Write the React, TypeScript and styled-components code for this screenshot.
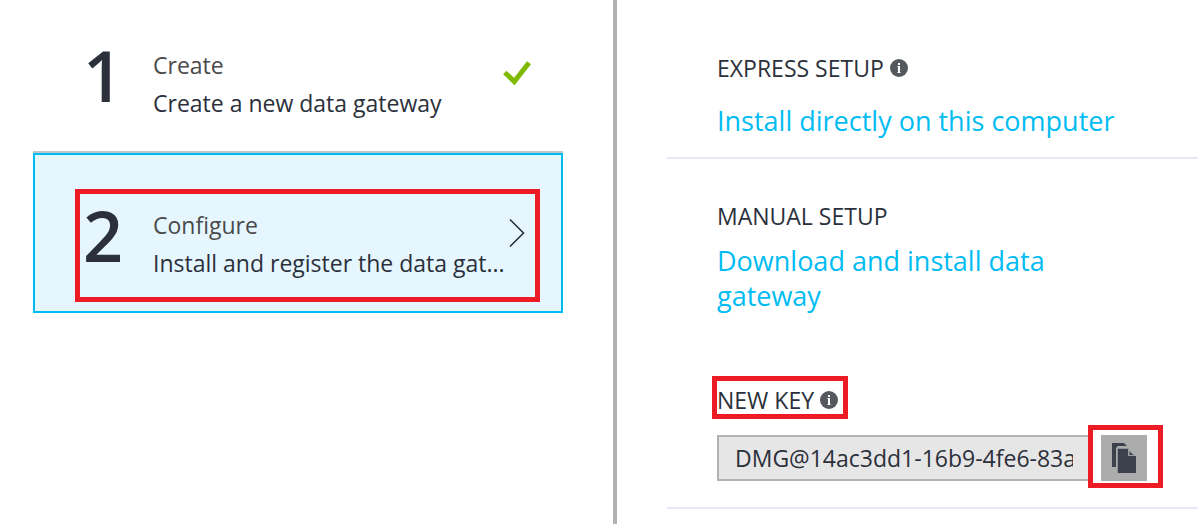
import React from "react";
import styled, { createGlobalStyle, css } from "styled-components";

const GlobalStyle = createGlobalStyle`
  *, *::before, *::after { box-sizing: border-box; }
  body {
    margin: 0;
    background: #fff;
    color: #2b303b;
    font-family: "Open Sans", "Noto Sans", sans-serif;
  }
`;

const Page = styled.main`
  display: grid;
  grid-template-columns: minmax(0, 617fr) minmax(0, 581fr);
  min-height: 100vh;
`;

const StepsPane = styled.section`
  padding: 0 50px 0 33px;
  border-right: 4px solid #b2b2b2;
`;

const SetupPane = styled.section`
  padding-left: 50px;
`;

const StepList = styled.ol`
  list-style: none;
  margin: 0;
  padding: 0;
`;

const Step = styled.li`
  position: relative;
`;

const StepButton = styled.button<{ $active?: boolean }>`
  display: flex;
  align-items: flex-start;
  width: 100%;
  margin: 0;
  border: 0;
  padding: 46px 32px 31px 50px;
  background: transparent;
  box-shadow: inset 0 -2px #c5c5c5;
  color: inherit;
  font: inherit;
  text-align: left;
  cursor: pointer;
  ${(p) =>
    p.$active &&
    css`
      padding-top: 53px;
      background: #e5f6fe;
      box-shadow: inset 0 0 0 2px #00bcf2;
    `}
`;

const StepNumber = styled.span`
  flex: 0 0 70px;
  font-size: 70px;
  font-weight: 600;
  line-height: 58px;
`;

const StepText = styled.span`
  flex: 1;
  min-width: 0;
  font-size: 23px;
  line-height: 38px;
`;

const StepTitle = styled.span`
  display: block;
  color: #4a4a4a;
`;

const StepDescription = styled.span`
  display: block;
  overflow: hidden;
  text-overflow: ellipsis;
  white-space: nowrap;
`;

const StepIcon = styled.svg`
  flex: none;
  height: 54px;
`;

const Highlight = styled.span<{ $inset: string }>`
  position: absolute;
  inset: ${(p) => p.$inset};
  border: 5px solid #ed1c24;
  pointer-events: none;
`;

const Group = styled.section`
  padding: 41px 51px 26px 50px;
  border-bottom: 2px solid #e7e7f3;
  &:first-child {
    padding-top: 52px;
    padding-bottom: 19px;
  }
`;

const labelText = css`
  font-size: 23px;
  font-weight: 400;
  line-height: 32px;
`;

const GroupTitle = styled.h2`
  ${labelText}
  display: flex;
  align-items: center;
  gap: 6px;
  margin: 0;
`;

const KeyLabel = styled.div`
  ${labelText}
  position: relative;
  display: flex;
  align-items: center;
  gap: 6px;
  width: fit-content;
  margin-top: 71px;
`;

const SetupLink = styled.a<{ $gap: number }>`
  display: block;
  margin-top: ${(p) => p.$gap}px;
  color: #00bcf2;
  font-size: 27px;
  line-height: 35px;
  text-decoration: none;
`;

const KeyRow = styled.div`
  display: flex;
  gap: 10px;
  margin-top: 19px;
`;

const KeyInput = styled.input`
  flex: 1;
  min-width: 0;
  height: 46px;
  border: 2px solid #b2b2b2;
  border-radius: 0;
  padding: 0 16px;
  background: #e6e6e6;
  color: inherit;
  font-family: inherit;
  font-size: 23px;
  outline: none;
`;

const CopyWrap = styled.div`
  position: relative;
  flex: none;
`;

const CopyHighlight = styled(Highlight)`
  box-shadow: inset 0 0 0 8px #fff;
`;

const CopyButton = styled.button`
  position: relative;
  display: flex;
  align-items: center;
  justify-content: center;
  width: 46px;
  height: 46px;
  border: 0;
  padding: 0;
  background: #acacac;
  cursor: pointer;
`;

const InfoIcon = () => (
  <svg width="18" height="18" viewBox="0 0 18 18" aria-hidden="true">
    <circle cx="9" cy="9" r="9" fill="#55585d" />
    <path d="M8 4h2v2H8zM8 7h2v7H8z" fill="#fff" />
    <path d="M7 7h1v1H7zM7 13h4v1H7z" fill="#fff" opacity="0.5" />
  </svg>
);

export default function App() {
  return (
    <>
      <GlobalStyle />
      <Page>
        <StepsPane aria-label="Steps">
          <StepList>
            <Step>
              <StepButton type="button">
                <StepNumber>1</StepNumber>
                <StepText>
                  <StepTitle>Create</StepTitle>
                  <StepDescription>Create a new data gateway</StepDescription>
                </StepText>
                <StepIcon width="28" viewBox="0 0 28 54" aria-hidden="true">
                  <path d="M1.8 26.5L11.3 35.5L26 16.8" fill="none" stroke="#7fba00" strokeWidth="5" />
                </StepIcon>
              </StepButton>
            </Step>
            <Step>
              <StepButton type="button" $active aria-current="step">
                <StepNumber>2</StepNumber>
                <StepText>
                  <StepTitle>Configure</StepTitle>
                  <StepDescription>Install and register the data gat...</StepDescription>
                </StepText>
                <StepIcon width="22" viewBox="0 0 22 54" aria-hidden="true">
                  <path d="M1 13.5L14.500 27L1 40.5" fill="none" stroke="#2b303b" strokeWidth="1.6" />
                </StepIcon>
              </StepButton>
              <Highlight $inset="36px 23px 11px 42px" />
            </Step>
          </StepList>
        </StepsPane>

        <SetupPane aria-label="Setup">
          <Group>
            <GroupTitle>
              EXPRESS SETUP
              <InfoIcon />
            </GroupTitle>
            <SetupLink href="#express" $gap={19}>
              Install directly on this computer
            </SetupLink>
          </Group>
          <Group>
            <GroupTitle>MANUAL SETUP</GroupTitle>
            <SetupLink href="#manual" $gap={11}>
              Download and install data gateway
            </SetupLink>
            <KeyLabel>
              <label htmlFor="gateway-key">NEW KEY</label>
              <InfoIcon />
              <Highlight $inset="-8px -10px -3px -5px" />
            </KeyLabel>
            <KeyRow>
              <KeyInput id="gateway-key" readOnly defaultValue="DMG@14ac3dd1-16b9-4fe6-83ab-5d2c" />
              <CopyWrap>
                <CopyHighlight $inset="-10px -16px -7px -13px" />
                <CopyButton type="button" aria-label="Copy key">
                  <svg width="24" height="30" viewBox="0 0 24 30" aria-hidden="true">
                    <path d="M0 0h12l3 3H6L4 5v19H0z" fill="#3c424d" />
                    <path d="M6 6h10v7h8v17H6z" fill="#3c424d" />
                    <path d="M5.500 30V5.500H17" fill="none" stroke="#8f9398" strokeWidth="1" />
                    <path d="M16 6l8 7h-8z" fill="#9da0a3" />
                    <path d="M17.500 8.500l4 3.500h-4z" fill="#3c424d" />
                  </svg>
                </CopyButton>
              </CopyWrap>
            </KeyRow>
          </Group>
        </SetupPane>
      </Page>
    </>
  );
}
